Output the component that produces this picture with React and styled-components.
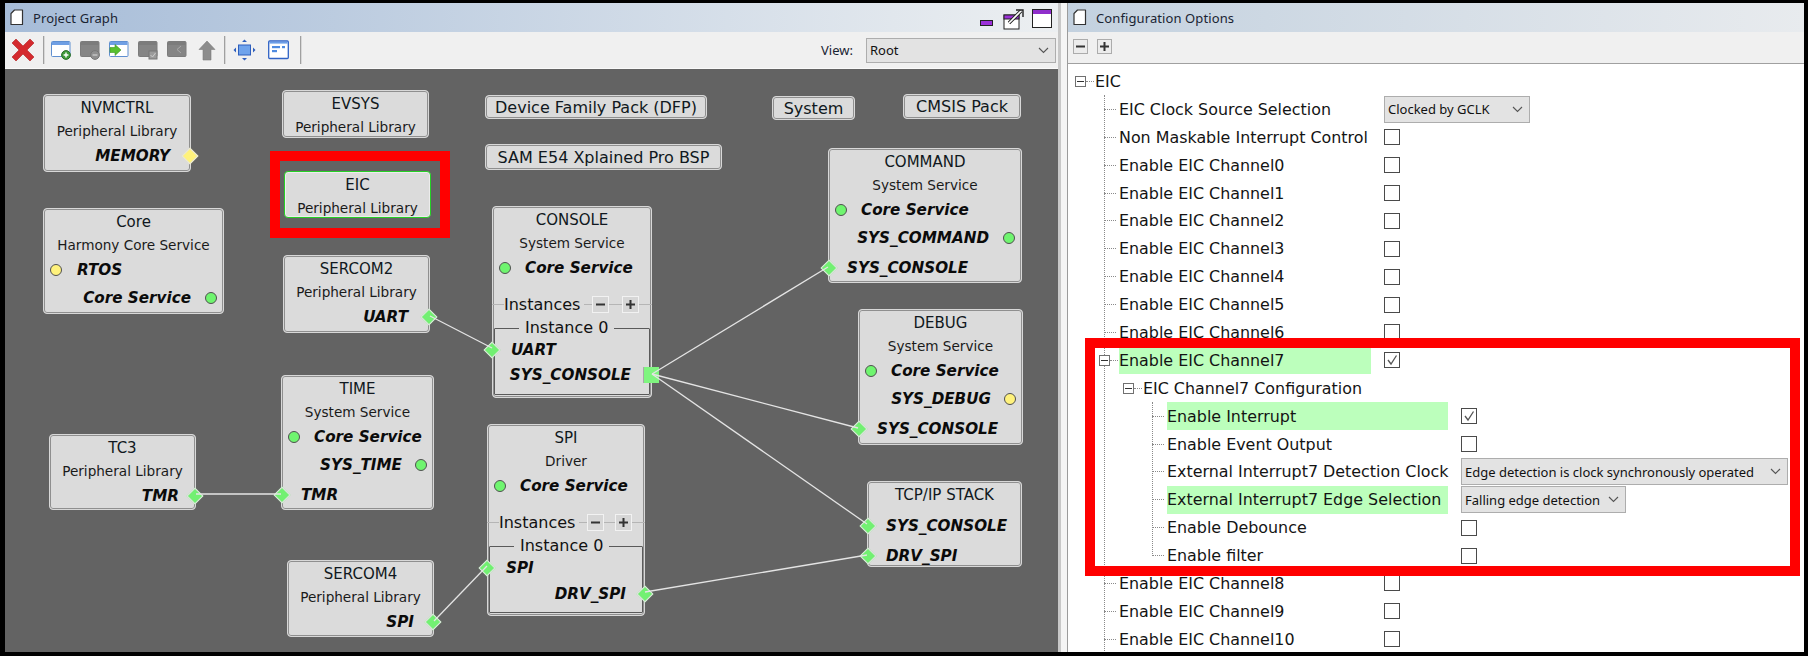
import React from "react";
import styled, { createGlobalStyle } from "styled-components";

const OX = 5;
const OY = 69;
const UI = `"DejaVu Sans", Verdana, sans-serif`;
const SANS = `"Noto Sans", "Open Sans", sans-serif`;

const Global = createGlobalStyle`
  html, body { margin: 0; padding: 0; background: #000; }
  #root { width: 1808px; height: 656px; overflow: hidden; }
`;

const Page = styled.div`
  box-sizing: border-box;
  width: 1808px;
  height: 656px;
  background: #000;
  padding: 3px 4px 4px 5px;
  display: flex;
  overflow: hidden;
`;
const LeftPanel = styled.section`
  width: 1053px;
  display: flex;
  flex-direction: column;
`;
const Splitter = styled.div`
  width: 10px;
  box-sizing: border-box;
  background: #f5f5f5;
  border-left: 3px solid #c8c8c8;
  border-right: 1px solid #9c9c9c;
`;
const RightPanel = styled.section`
  flex: 1;
  min-width: 0;
  display: flex;
  flex-direction: column;
  background: #fff;
  position: relative;
  overflow: hidden;
`;
const TitleBar = styled.header`
  height: 29px;
  flex: none;
  display: flex;
  align-items: center;
  padding: 0 6px 0 ${(p) => p.$pad}px;
  gap: 9px;
  background: linear-gradient(90deg, ${(p) => p.$from}, ${(p) => p.$to});
  font: 13px ${SANS};
  color: #1a2433;
`;
const TitleText = styled.span`
  flex: 1;
  letter-spacing: 0.1px;
`;
const WindowControls = styled.div`
  display: flex;
  align-items: center;
  gap: 8px;
  padding-top: 2px;
`;
const MinimizeSlot = styled.span`
  display: flex;
  margin: 9px 1px 0 0;
`;
const Toolbar = styled.div`
  height: 36px;
  flex: none;
  background: #f0f0f0;
  display: flex;
  align-items: center;
  padding: 0 2px 0 6px;
  border-bottom: 1px solid #fafafa;
`;
const ToolSep = styled.span`
  width: 1px;
  height: 28px;
  background: #a0a0a0;
  margin: 0 ${(p) => p.$r ?? 7}px 0 ${(p) => p.$l ?? 7}px;
  box-shadow: 1px 0 0 #d8d8d8;
`;
const ToolIcon = styled.span`
  display: flex;
  width: ${(p) => p.$w ?? 20}px;
  margin-right: ${(p) => p.$gap ?? 9}px;
`;
const ViewGroup = styled.div`
  margin-left: auto;
  display: flex;
  align-items: center;
  gap: 13px;
  font: 13px ${SANS};
  color: #1a2433;
`;
const Combo = styled.div`
  box-sizing: border-box;
  width: ${(p) => p.$w}px;
  height: ${(p) => p.$h}px;
  flex: none;
  background: #e3e3e3;
  border: 1px solid #adadad;
  display: flex;
  align-items: center;
  justify-content: space-between;
  padding: 0 6px 0 3px;
  font: 13px ${SANS};
  color: #111;
  white-space: nowrap;
`;
const Canvas = styled.div`
  flex: 1;
  position: relative;
  background: #636363;
  overflow: hidden;
`;
const Wires = styled.svg`
  position: absolute;
  left: 0;
  top: 0;
  z-index: 3;
  pointer-events: none;
`;
const Node = styled.div`
  position: absolute;
  left: ${(p) => p.$x - OX}px;
  top: ${(p) => p.$y - OY}px;
  width: ${(p) => p.$w}px;
  height: ${(p) => p.$h}px;
  box-sizing: border-box;
  padding-top: 0.5px;
  background: #dbdbdb;
  border: 1px solid ${(p) => (p.$selected ? "#25d025" : "#d8d8d8")};
  box-shadow: ${(p) => (p.$selected ? "inset 0 0 0 1px #ececec" : "inset 0 0 0 1px #8f8f8f")};
  border-radius: 4px;
  display: flex;
  flex-direction: column;
  color: #111;
  font-family: ${UI};
`;
const NodeTitle = styled.div`
  height: 24px;
  flex: none;
  line-height: 24px;
  text-align: center;
  font-size: 15px;
  color: #101820;
`;
const NodeSub = styled.div`
  height: 24px;
  flex: none;
  line-height: 24px;
  margin: -1px 0 1.5px;
  text-align: center;
  font-size: 13.6px;
  color: #1a1a1a;
`;
const Port = styled.div`
  position: relative;
  height: 24px;
  flex: none;
  line-height: 24px;
  margin-top: ${(p) => p.$gap ?? 0}px;
  text-align: ${(p) => (p.$r !== undefined ? "right" : "left")};
  padding: 0 ${(p) => p.$r ?? 0}px 0 ${(p) => p.$l ?? 0}px;
  font-size: 15.2px;
  font-weight: bold;
  font-style: italic;
  white-space: nowrap;
  color: #0b0b0b;
`;
const Dot = styled.i`
  position: absolute;
  top: 6px;
  ${(p) => p.$side}: 6px;
  width: 12px;
  height: 12px;
  box-sizing: border-box;
  border-radius: 50%;
  border: 1.5px solid #505050;
  background: ${(p) => (p.$warn ? "#fff27c" : "#6ff56f")};
`;
const Diamond = styled.i`
  position: absolute;
  top: 6px;
  ${(p) => p.$side}: ${(p) => p.$off ?? -7}px;
  width: 12px;
  height: 12px;
  box-sizing: border-box;
  transform: rotate(45deg);
  border: 1px solid #e4e4e4;
  background: ${(p) => (p.$warn ? "#fff27c" : "#72f072")};
  z-index: 2;
`;
const SquarePort = styled.i`
  position: absolute;
  top: 4px;
  right: ${(p) => p.$off}px;
  width: 16px;
  height: 16px;
  background: #7ff57f;
  border-left: 1px solid #a8a8a8;
  box-sizing: border-box;
  z-index: 2;
`;
const InstanceBar = styled.div`
  display: flex;
  align-items: center;
  height: 24px;
  margin-top: 12px;
  flex: none;
  margin-left: -1px;
  margin-right: -1px;
  font-size: 16px;
`;
const Rule = styled.span`
  height: 1px;
  background: #b5b5b5;
  width: ${(p) => p.$w ?? 0}px;
  flex: ${(p) => (p.$w ? "none" : 1)};
`;
const InstanceLabel = styled.span`
  margin: 0 4px 0 0;
`;
const MiniButton = styled.span`
  width: 17px;
  height: 17px;
  box-sizing: border-box;
  flex: none;
  border: 1px solid #f2f2f2;
  background: #d6d6d6;
  display: flex;
  align-items: center;
  justify-content: center;
`;
const InstanceBox = styled.fieldset`
  flex: 1;
  margin: 2px 1px 2px 1px;
  padding: 0;
  min-width: 0;
  border: 1.5px solid #5a5a5a;
  border-radius: 1px;
`;
const InstanceLegend = styled.legend`
  margin-left: 24px;
  padding: 0 6px;
  font-size: 16px;
  line-height: 20px;
  height: 20px;
`;
const LabelChip = styled.div`
  position: absolute;
  left: ${(p) => p.$x - OX}px;
  top: ${(p) => p.$y - OY}px;
  width: ${(p) => p.$w}px;
  height: ${(p) => p.$h}px;
  box-sizing: border-box;
  background: #dbdbdb;
  border: 1px solid #d8d8d8;
  box-shadow: inset 0 0 0 1px #8f8f8f;
  border-radius: 4px;
  display: flex;
  align-items: center;
  justify-content: center;
  font: 16px ${UI};
  color: #101820;
  white-space: nowrap;
`;
const RedFrame = styled.div`
  position: absolute;
  left: ${(p) => p.$x}px;
  top: ${(p) => p.$y}px;
  width: ${(p) => p.$w}px;
  height: ${(p) => p.$h}px;
  box-sizing: border-box;
  border: 10px solid #ff0000;
  z-index: 5;
  pointer-events: none;
`;
const ConfigBar = styled.div`
  height: 32px;
  flex: none;
  box-sizing: border-box;
  background: #f0f0f0;
  border-bottom: 1px solid #a0a0a0;
  display: flex;
  align-items: flex-start;
  padding: 3px 0 0 5px;
  gap: 9px;
`;
const SquareButton = styled.span`
  width: 15px;
  height: 15px;
  margin-top: 4px;
  box-sizing: border-box;
  border: 1px solid #acacac;
  background: #ececec;
  display: flex;
  align-items: center;
  justify-content: center;
`;
const Tree = styled.div`
  flex: 1;
  padding-top: 3.5px;
  min-height: 0;
  font: 15.9px ${UI};
  color: #141414;
`;
const Group = styled.div`
  position: relative;
  &::before {
    content: "";
    position: absolute;
    left: ${(p) => p.$guide}px;
    top: 0;
    bottom: ${(p) => p.$end ?? 0}px;
    border-left: 1px dotted #8a8a8a;
  }
`;
const Row = styled.div`
  position: relative;
  height: 27.9px;
  display: flex;
  align-items: center;
  padding-left: ${(p) => 7 + p.$level * 24}px;
`;
const Slot = styled.span`
  width: 20px;
  flex: none;
  display: flex;
  align-items: center;
`;
const Stub = styled.span`
  width: 12px;
  margin-left: 5px;
  border-top: 1px dotted #8a8a8a;
`;
const Expander = styled.span`
  width: 11px;
  height: 11px;
  flex: none;
  box-sizing: border-box;
  border: 1px solid #707070;
  background: #fff;
  display: flex;
  align-items: center;
  justify-content: center;
  position: relative;
  &::before {
    content: "";
    width: 7px;
    height: 1px;
    background: #333;
  }
  &::after {
    content: "";
    position: absolute;
    left: 10px;
    top: 4px;
    width: 8px;
    border-top: 1px dotted #8a8a8a;
  }
`;
const Label = styled.span`
  width: ${(p) => p.$w}px;
  flex: none;
  height: 100%;
  display: flex;
  align-items: center;
  margin-right: 13px;
  white-space: nowrap;
  background: ${(p) => (p.$on ? "#bcffbc" : "transparent")};
`;
const Check = styled.span`
  width: 16px;
  height: 16px;
  flex: none;
  box-sizing: border-box;
  border: 1.5px solid #4a4a4a;
  background: #fff;
  display: flex;
  align-items: center;
  justify-content: center;
`;

const PageGlyph = () => (
  <svg width="14" height="17" viewBox="0 0 14 17">
    <path d="M4.5 1H12.5V15.5H1V4.5Z" fill="#fff" stroke="#333" strokeWidth="1.2" strokeLinejoin="round" />
  </svg>
);
const MinimizeIcon = () => (
  <svg width="13" height="6" viewBox="0 0 13 6">
    <rect x="0.5" y="0.5" width="12" height="5" fill="#9b30d8" stroke="#222" strokeWidth="1" />
  </svg>
);
const RestoreIcon = () => (
  <svg width="22" height="22" viewBox="0 0 22 22">
    <rect x="2" y="7" width="15" height="14" fill="#fff" stroke="#222" />
    <rect x="2" y="7" width="15" height="4" fill="#9b30d8" stroke="#222" />
    <path d="M7 15L19 3" stroke="#222" strokeWidth="3.4" />
    <path d="M7 15L19 3" stroke="#fff" strokeWidth="1.6" />
    <path d="M14 2H21V9" fill="none" stroke="#222" strokeWidth="1.4" />
  </svg>
);
const MaximizeIcon = () => (
  <svg width="20" height="19" viewBox="0 0 20 19">
    <rect x="0.5" y="0.5" width="19" height="18" fill="#fff" stroke="#222" />
    <rect x="1" y="1" width="18" height="4" fill="#8f2ecb" />
  </svg>
);
const RedX = () => (
  <svg width="24" height="24" viewBox="0 0 24 24">
    <path d="M5 1L12 8L19 1L23 5L16 12L23 19L19 23L12 16L5 23L1 19L8 12L1 5Z" fill="#d42a2e" stroke="#b02020" strokeWidth="0.6" strokeLinejoin="round" />
  </svg>
);
const WindowIcon = ({ on, badge }) => {
  const frame = on ? "#5f8fd0" : "#7c7c7c";
  const fill = on ? "#fff" : "#858585";
  return (
    <svg width="20" height="20" viewBox="0 0 20 20">
      <rect x="0.5" y="1.5" width="18.5" height="15" rx="1" fill={fill} stroke={frame} />
      <rect x="1" y="2" width="17.5" height="3" fill={on ? "#6f9fe4" : "#7c7c7c"} />
      {badge === "plus" && (
        <g>
          <circle cx="15" cy="15" r="4.4" fill="#3f9a3a" stroke="#2a6d2a" />
          <path d="M12.6 15H17.4M15 12.6V17.4" stroke="#fff" strokeWidth="1.4" />
        </g>
      )}
      {badge === "minus" && (
        <g>
          <circle cx="15" cy="15" r="4.4" fill="#8f8f8f" stroke="#777" />
          <path d="M12.6 15H17.4" stroke="#ccc" strokeWidth="1.3" />
        </g>
      )}
      {badge === "arrow" && <path d="M1 7.5H6V4.5L12 10L6 15.5V12.5H1Z" fill="#58c02e" stroke="#3d9320" strokeWidth="0.6" />}
      {badge === "check" && (
        <g>
          <rect x="11" y="11" width="8" height="8" fill="#9a9a9a" stroke="#777" />
          <path d="M12.5 15L14.5 17L17.5 13" fill="none" stroke="#ccc" strokeWidth="1" />
        </g>
      )}
      {badge === "back" && <path d="M14 6L10 9.5L14 13" fill="none" stroke="#aaa" strokeWidth="1" />}
    </svg>
  );
};
const UpArrow = () => (
  <svg width="18" height="21" viewBox="0 0 18 21">
    <path d="M9 1L17 9.5H13V20H5V9.5H1Z" fill="#8c8c8c" stroke="#7d7d7d" strokeWidth="0.6" strokeLinejoin="round" />
  </svg>
);
const FitIcon = () => (
  <svg width="23" height="22" viewBox="0 0 23 22">
    <rect x="5.5" y="6" width="12" height="10" fill="#6fa3ec" stroke="#2f5fbd" />
    <path d="M11.5 0.5L14 3H9ZM11.5 21.5L9 19H14ZM0.5 11L3 8.5V13.5ZM22.5 11L20 13.5V8.5Z" fill="#2f5fbd" />
  </svg>
);
const PanelIcon = () => (
  <svg width="21" height="20" viewBox="0 0 21 20">
    <rect x="0.7" y="1" width="19.6" height="17.5" rx="1" fill="#fff" stroke="#2f62c5" strokeWidth="1.3" />
    <rect x="1.4" y="1.6" width="18.2" height="2" fill="#6d9fe8" />
    <rect x="4" y="6" width="8" height="2.2" fill="#4f8be0" />
    <rect x="14" y="6" width="3" height="2.2" fill="#4f8be0" />
    <rect x="4" y="10" width="5" height="2.2" fill="#4f8be0" />
  </svg>
);
const Chevron = () => (
  <svg width="11" height="7" viewBox="0 0 11 7">
    <path d="M1 1L5.5 5.5L10 1" fill="none" stroke="#555" strokeWidth="1.1" />
  </svg>
);
const Sign = ({ plus }) => (
  <svg width="9" height="9" viewBox="0 0 9 9">
    <path d={plus ? "M0 4.5H9M4.5 0V9" : "M0 4.5H9"} stroke="#333" strokeWidth="2" />
  </svg>
);
const Tick = () => (
  <svg width="12" height="12" viewBox="0 0 12 12">
    <path d="M2 6L5 10L10.5 1.5" fill="none" stroke="#555" strokeWidth="1.3" />
  </svg>
);

const wires = [
  [430, 316, 492, 348],
  [652, 374, 828, 267],
  [652, 374, 858, 428],
  [652, 374, 867, 524],
  [645, 592, 867, 555],
  [434, 621, 487, 566],
  [196, 494, 281, 494],
];

const Instances = () => (
  <InstanceBar>
    <Rule $w={12} />
    <InstanceLabel>Instances</InstanceLabel>
    <Rule $w={8} />
    <MiniButton><Sign /></MiniButton>
    <Rule />
    <MiniButton><Sign plus /></MiniButton>
    <Rule $w={13} />
  </InstanceBar>
);

const channels = (a, b) => {
  const out = [];
  for (let i = a; i <= b; i++) out.push(i);
  return out;
};

const LeafRow = ({ level, w, on, children, control }) => (
  <Row $level={level}>
    <Slot><Stub /></Slot>
    <Label $w={w} $on={on}>{children}</Label>
    {control}
  </Row>
);
const Box = ({ checked }) => <Check>{checked && <Tick />}</Check>;

export default function App() {
  return (
    <Page>
      <Global />
      <LeftPanel>
        <TitleBar $pad={5} $from="#a6bcd8" $to="#eceff1">
          <PageGlyph />
          <TitleText>Project Graph</TitleText>
          <WindowControls>
            <MinimizeSlot><MinimizeIcon /></MinimizeSlot>
            <RestoreIcon />
            <MaximizeIcon />
          </WindowControls>
        </TitleBar>
        <Toolbar>
          <RedX />
          <ToolSep $l={8} $r={7} />
          <ToolIcon><WindowIcon on badge="plus" /></ToolIcon>
          <ToolIcon><WindowIcon badge="minus" /></ToolIcon>
          <ToolIcon><WindowIcon on badge="arrow" /></ToolIcon>
          <ToolIcon><WindowIcon badge="check" /></ToolIcon>
          <ToolIcon $gap={11}><WindowIcon badge="back" /></ToolIcon>
          <UpArrow />
          <ToolSep $l={8} $r={8} />
          <ToolIcon $w={23} $gap={12}><FitIcon /></ToolIcon>
          <PanelIcon />
          <ToolSep $l={11} />
          <ViewGroup>
            <span>View:</span>
            <Combo $w={190} $h={25}>Root<Chevron /></Combo>
          </ViewGroup>
        </Toolbar>
        <Canvas>
          <Node $x={43} $y={94} $w={148} $h={78}>
            <NodeTitle>NVMCTRL</NodeTitle>
            <NodeSub>Peripheral Library</NodeSub>
            <Port $r={20}>MEMORY<Diamond $side="right" $warn $off={-6} /></Port>
          </Node>
          <Node $x={282} $y={90} $w={147} $h={48}>
            <NodeTitle>EVSYS</NodeTitle>
            <NodeSub>Peripheral Library</NodeSub>
          </Node>
          <Node $x={284} $y={171} $w={147} $h={47} $selected>
            <NodeTitle>EIC</NodeTitle>
            <NodeSub>Peripheral Library</NodeSub>
          </Node>
          <Node $x={43} $y={208} $w={181} $h={106}>
            <NodeTitle>Core</NodeTitle>
            <NodeSub>Harmony Core Service</NodeSub>
            <Port $l={33}>RTOS<Dot $side="left" $warn /></Port>
            <Port $r={32} $gap={4}>Core Service<Dot $side="right" /></Port>
          </Node>
          <Node $x={283} $y={255} $w={147} $h={78}>
            <NodeTitle>SERCOM2</NodeTitle>
            <NodeSub>Peripheral Library</NodeSub>
            <Port $r={21}>UART<Diamond $side="right" $off={-6} /></Port>
          </Node>
          <Node $x={281} $y={375} $w={153} $h={135}>
            <NodeTitle>TIME</NodeTitle>
            <NodeSub>System Service</NodeSub>
            <Port $l={32}>Core Service<Dot $side="left" /></Port>
            <Port $r={31} $gap={4}>SYS_TIME<Dot $side="right" /></Port>
            <Port $l={19} $gap={6}>TMR<Diamond $side="left" $off={-6} /></Port>
          </Node>
          <Node $x={49} $y={434} $w={147} $h={76}>
            <NodeTitle>TC3</NodeTitle>
            <NodeSub>Peripheral Library</NodeSub>
            <Port $r={16}>TMR<Diamond $side="right" $off={-6} /></Port>
          </Node>
          <Node $x={287} $y={560} $w={147} $h={77}>
            <NodeTitle>SERCOM4</NodeTitle>
            <NodeSub>Peripheral Library</NodeSub>
            <Port $r={19}>SPI<Diamond $side="right" $off={-6} /></Port>
          </Node>
          <Node $x={492} $y={206} $w={160} $h={192}>
            <NodeTitle>CONSOLE</NodeTitle>
            <NodeSub>System Service</NodeSub>
            <Port $l={32}>Core Service<Dot $side="left" /></Port>
            <Instances />
            <InstanceBox>
              <InstanceLegend>Instance 0</InstanceLegend>
              <Port $l={16}>UART<Diamond $side="left" $off={-9} /></Port>
              <Port $r={18} $gap={1}>SYS_CONSOLE<SquarePort $off={-10} /></Port>
            </InstanceBox>
          </Node>
          <Node $x={487} $y={424} $w={158} $h={192}>
            <NodeTitle>SPI</NodeTitle>
            <NodeSub>Driver</NodeSub>
            <Port $l={32}>Core Service<Dot $side="left" /></Port>
            <Instances />
            <InstanceBox>
              <InstanceLegend>Instance 0</InstanceLegend>
              <Port $l={16}>SPI<Diamond $side="left" $off={-9} /></Port>
              <Port $r={16} $gap={2}>DRV_SPI<Diamond $side="right" $off={-9} /></Port>
            </InstanceBox>
          </Node>
          <Node $x={828} $y={148} $w={194} $h={135}>
            <NodeTitle>COMMAND</NodeTitle>
            <NodeSub>System Service</NodeSub>
            <Port $l={32}>Core Service<Dot $side="left" /></Port>
            <Port $r={32} $gap={4}>SYS_COMMAND<Dot $side="right" /></Port>
            <Port $l={18} $gap={6}>SYS_CONSOLE<Diamond $side="left" $off={-6} /></Port>
          </Node>
          <Node $x={858} $y={309} $w={165} $h={136}>
            <NodeTitle>DEBUG</NodeTitle>
            <NodeSub>System Service</NodeSub>
            <Port $l={32}>Core Service<Dot $side="left" /></Port>
            <Port $r={31} $gap={4}>SYS_DEBUG<Dot $side="right" $warn /></Port>
            <Port $l={18} $gap={6}>SYS_CONSOLE<Diamond $side="left" $off={-6} /></Port>
          </Node>
          <Node $x={867} $y={481} $w={155} $h={86}>
            <NodeTitle>TCP/IP STACK</NodeTitle>
            <Port $l={18} $gap={7}>SYS_CONSOLE<Diamond $side="left" $off={-6} /></Port>
            <Port $l={18} $gap={6}>DRV_SPI<Diamond $side="left" $off={-6} /></Port>
          </Node>
          <LabelChip $x={485} $y={95} $w={222} $h={24}>Device Family Pack (DFP)</LabelChip>
          <LabelChip $x={485} $y={144} $w={237} $h={26}>SAM E54 Xplained Pro BSP</LabelChip>
          <LabelChip $x={772} $y={96} $w={83} $h={24}>System</LabelChip>
          <LabelChip $x={903} $y={94} $w={118} $h={25}>CMSIS Pack</LabelChip>
          <Wires width="1053" height="583" viewBox={`${OX} ${OY} 1053 583`}>
            {wires.map(([a, b, c, d]) => (
              <line key={`${a}-${b}-${c}-${d}`} x1={a} y1={b} x2={c} y2={d} stroke="#e4e4e4" strokeWidth="1.3" />
            ))}
          </Wires>
          <RedFrame $x={265} $y={82} $w={180} $h={87} />
        </Canvas>
      </LeftPanel>
      <Splitter />
      <RightPanel>
        <TitleBar $pad={5} $from="#c3d1df" $to="#e8ebee">
          <PageGlyph />
          <TitleText>Configuration Options</TitleText>
        </TitleBar>
        <ConfigBar>
          <SquareButton><Sign /></SquareButton>
          <SquareButton><Sign plus /></SquareButton>
        </ConfigBar>
        <Tree>
          <Row $level={0}>
            <Slot><Expander /></Slot>
            <Label $w={200}>EIC</Label>
          </Row>
          <Group $guide={36}>
            <LeafRow level={1} w={252} control={<Combo $w={146} $h={27}>Clocked by GCLK<Chevron /></Combo>}>EIC Clock Source Selection</LeafRow>
            <LeafRow level={1} w={252} control={<Box />}>Non Maskable Interrupt Control</LeafRow>
            {channels(0, 6).map((i) => (
              <LeafRow key={i} level={1} w={252} control={<Box />}>{`Enable EIC Channel${i}`}</LeafRow>
            ))}
            <Row $level={1}>
              <Slot><Expander /></Slot>
              <Label $w={252} $on>Enable EIC Channel7</Label>
              <Box checked />
            </Row>
            <Row $level={2}>
              <Slot><Expander /></Slot>
              <Label $w={250}>EIC Channel7 Configuration</Label>
            </Row>
            <Group $guide={84} $end={14}>
              <LeafRow level={3} w={281} on control={<Box checked />}>Enable Interrupt</LeafRow>
              <LeafRow level={3} w={281} control={<Box />}>Enable Event Output</LeafRow>
              <LeafRow level={3} w={281} control={<Combo $w={327} $h={27}>Edge detection is clock synchronously operated<Chevron /></Combo>}>External Interrupt7 Detection Clock</LeafRow>
              <LeafRow level={3} w={281} on control={<Combo $w={165} $h={27}>Falling edge detection<Chevron /></Combo>}>External Interrupt7 Edge Selection</LeafRow>
              <LeafRow level={3} w={281} control={<Box />}>Enable Debounce</LeafRow>
              <LeafRow level={3} w={281} control={<Box />}>Enable filter</LeafRow>
            </Group>
            {channels(8, 10).map((i) => (
              <LeafRow key={i} level={1} w={252} control={<Box />}>{`Enable EIC Channel${i}`}</LeafRow>
            ))}
          </Group>
        </Tree>
        <RedFrame $x={17} $y={335} $w={715} $h={238} />
      </RightPanel>
    </Page>
  );
}
